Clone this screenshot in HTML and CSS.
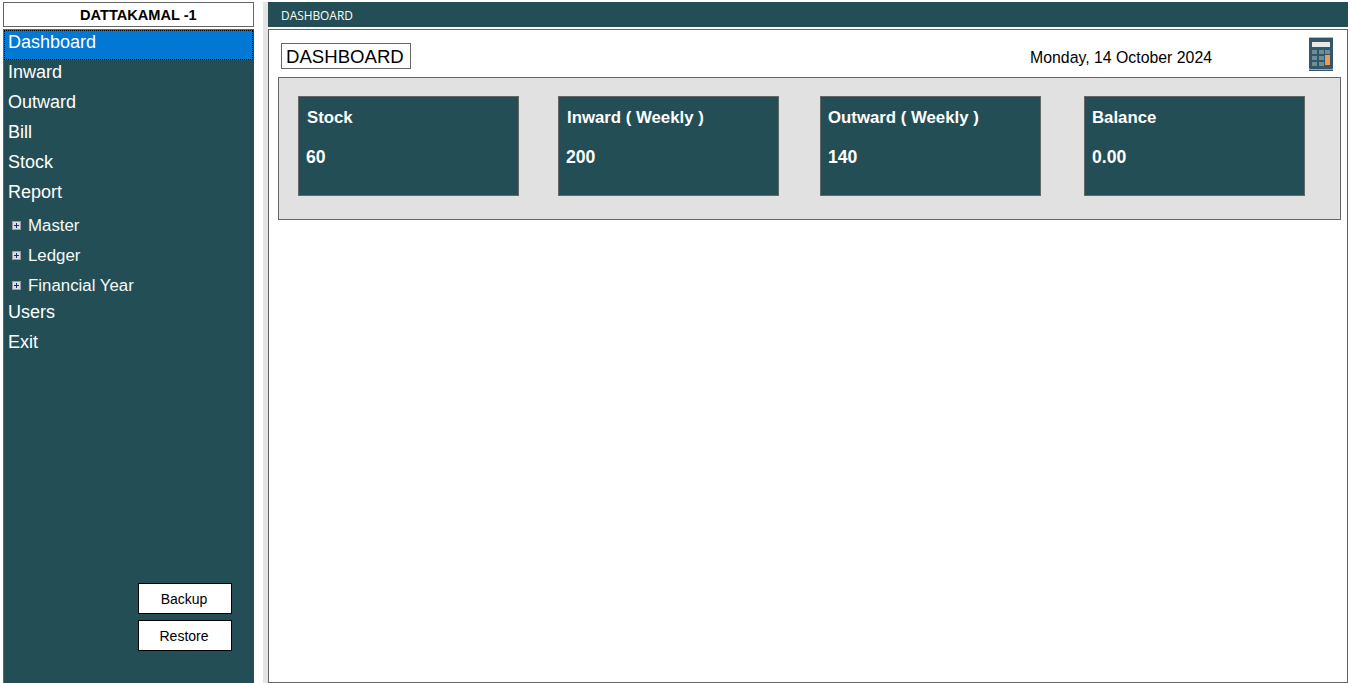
FILE: index.html
```html
<!DOCTYPE html>
<html lang="en">
<head>
<meta charset="utf-8">
<title>Dashboard</title>
<link rel="stylesheet" href="styles.css">
</head>
<body>
<div class="app">
  <aside class="side">
    <div class="company">DATTAKAMAL -1</div>
    <nav class="menu">
      <a class="item active">Dashboard</a>
      <a class="item">Inward</a>
      <a class="item">Outward</a>
      <a class="item">Bill</a>
      <a class="item">Stock</a>
      <a class="item">Report</a>
      <div class="tree">
        <a class="node"><span class="plus"></span>Master</a>
        <a class="node"><span class="plus"></span>Ledger</a>
        <a class="node"><span class="plus"></span>Financial Year</a>
      </div>
      <a class="item">Users</a>
      <a class="item">Exit</a>
      <div class="actions">
        <button class="btn">Backup</button>
        <button class="btn">Restore</button>
      </div>
    </nav>
  </aside>
  <div class="splitter"></div>
  <main class="main">
    <div class="topbar">DASHBOARD</div>
    <section class="content">
      <div class="head">
        <h1 class="title">DASHBOARD</h1>
        <div class="date">Monday, 14 October 2024</div>
        <svg class="calc" width="25" height="34" viewBox="0 0 25 34" aria-hidden="true">
          <rect x="0" y="0" width="24" height="32" rx="1" fill="#35566a"/>
          <rect x="0" y="0" width="24" height="1" fill="#a9bcc4"/>
          <rect x="0" y="32.5" width="24" height="1.5" fill="#35566a"/>
          <rect x="3" y="5" width="18" height="5" fill="#e8e8e8"/>
          <g fill="#6b8f95">
            <rect x="3" y="13" width="5" height="4"/><rect x="10" y="13" width="5" height="4"/><rect x="16" y="13" width="5" height="4"/>
            <rect x="3" y="19" width="5" height="4"/><rect x="10" y="19" width="5" height="4"/>
            <rect x="3" y="25" width="5" height="4"/><rect x="10" y="25" width="5" height="4"/>
          </g>
          <rect x="16" y="18" width="5" height="10" fill="#f09a50"/>
        </svg>
      </div>
      <div class="panel">
        <div class="card c1"><div class="label">Stock</div><div class="value">60</div></div>
        <div class="card c2"><div class="label">Inward ( Weekly )</div><div class="value">200</div></div>
        <div class="card c3"><div class="label">Outward ( Weekly )</div><div class="value">140</div></div>
        <div class="card c4"><div class="label">Balance</div><div class="value">0.00</div></div>
      </div>
    </section>
  </main>
</div>
</body>
</html>
```
FILE: styles.css
```css
* { box-sizing: border-box; }
html, body { margin: 0; height: 100%; background: #fff; overflow: hidden; }
body { font-family: "Liberation Sans", Arial, sans-serif; color: #000; }

.app { display: flex; height: 683px; padding-top: 2px; }

.side { width: 251px; margin-left: 3px; display: flex; flex-direction: column; gap: 2px; }
.company {
  height: 25px; border: 1px solid #666; background: #fff;
  font-weight: bold; font-size: 14.6px; line-height: 24px;
  padding-left: 76px; white-space: nowrap;
}
.menu {
  flex: 1; display: flex; flex-direction: column;
  background: #234e55; border: 1px solid #666; border-bottom: 0; border-right-color: #234e55;
  color: #fff;
}
.item { height: 30px; line-height: 24px; font-size: 18px; padding-left: 4px; }
.item.active { background: #0078d4; outline: 1px dotted #000; outline-offset: -1px; }
.tree { display: flex; flex-direction: column; }
.node { height: 30px; padding-top: 1px; font-size: 16.85px; padding-left: 8px; display: flex; align-items: center; gap: 7px; color: #f2fafa; }
.plus {
  width: 9px; height: 9px; background: #dcdce4; border: 1px solid #9a9aa0;
  position: relative; flex: none;
}
.plus::before { content: ""; position: absolute; left: 1px; top: 3px; width: 5px; height: 1px; background: #1a2a80; }
.plus::after { content: ""; position: absolute; left: 3px; top: 1px; width: 1px; height: 5px; background: #1a2a80; }
.actions { margin-top: auto; margin-bottom: 32px; display: flex; flex-direction: column; align-items: flex-end; gap: 6px; padding-right: 21px; }
.btn {
  width: 94px; height: 31px; background: #fff; border: 1px solid #000; border-radius: 0;
  font: 14px "Liberation Sans", Arial, sans-serif; color: #000; padding: 1px 2px 0 0;
}

.splitter { width: 5px; margin-left: 9px; background: #e4e4e4; }

.main { width: 1080px; display: flex; flex-direction: column; gap: 2px; }
.topbar {
  height: 25px; background: #234e55; color: #fff;
  font-family: "Open Sans", sans-serif; font-size: 11.9px; line-height: 27px; padding-left: 13px;
}
.content { flex: 1; border: 1px solid #666; padding: 7px 6px 0 9px; }
.head { height: 40px; display: flex; align-items: flex-start; }
.title {
  margin: 6px 0 0 3px; height: 26px; width: 130px; border: 1px solid #666;
  font-weight: normal; font-size: 18.6px; line-height: 25px; padding-left: 4px; white-space: nowrap;
}
.date { margin: 11px 0 0 619px; font-size: 15.85px; line-height: 20px; white-space: nowrap; }
.calc { margin: 0 0 0 97px; flex: none; }

.panel {
  height: 143px; border: 1px solid #666; background: #e1e1e1;
  padding: 18px 0 0 19px; display: flex;
}
.card { width: 221px; height: 100px; background: #234e55; border: 1px solid #666; color: #fff; font-weight: bold; font-size: 16.8px; padding: 11px 8px 0; }
.c2 { margin-left: 39px; }
.c3 { margin-left: 41px; padding-left: 7px; }
.c4 { margin-left: 43px; padding-left: 7px; }
.label { line-height: 20px; white-space: nowrap; }
.value { line-height: 20px; margin-top: 19px; font-size: 17.6px; margin-left: -1px; }
.c3 .value, .c4 .value { margin-left: 0; }
```
